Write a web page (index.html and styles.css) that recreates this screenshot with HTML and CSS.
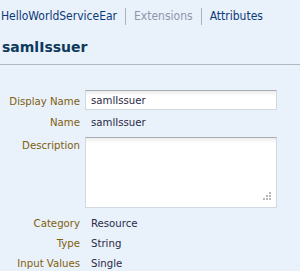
FILE: index.html
```html
<!DOCTYPE html>
<html lang="en">
<head>
    <meta charset="UTF-8">
    <title>samlIssuer</title>
    <link rel="stylesheet" href="styles.css">
</head>
<body>
    <div class="crumbs">
      <a class="crumb">HelloWorldServiceEar</a>
      <span class="crumb off">Extensions</span>
      <a class="crumb">Attributes</a>
    </div>
    <h1 class="title">samlIssuer</h1>
    <div class="form">
      <label class="lbl">Display Name</label>
      <input class="field" type="text" value="samlIssuer">
      <span class="lbl">Name</span>
      <span class="val">samlIssuer</span>
      <label class="lbl top">Description</label>
      <div class="area-wrap">
        <textarea class="area"></textarea>
        <svg class="grip" width="9" height="9" viewBox="0 0 9 9">
          <rect x="7" y="0" width="2" height="2" fill="#b8b8b8"/>
          <rect x="4" y="3" width="2" height="2" fill="#b8b8b8"/>
          <rect x="7" y="3" width="2" height="2" fill="#b8b8b8"/>
          <rect x="1" y="6" width="2" height="2" fill="#b8b8b8"/>
          <rect x="4" y="6" width="2" height="2" fill="#b8b8b8"/>
          <rect x="7" y="6" width="2" height="2" fill="#b8b8b8"/>
        </svg>
      </div>
      <span class="lbl">Category</span>
      <span class="val">Resource</span>
      <span class="lbl">Type</span>
      <span class="val">String</span>
      <span class="lbl">Input Values</span>
      <span class="val">Single</span>
    </div>
</body>
</html>
```

FILE: styles.css
```css
body { margin: 0; background: #e9f1fb; font-family: "DejaVu Sans Condensed", "DejaVu Sans", sans-serif; font-size: 11.3px; }
.crumbs { display: flex; align-items: center; padding: 8px 0 0 1px; height: 17px; font-size: 12px; }
.crumb { color: #0b3a78; padding: 0 8px; border-left: 1px solid #a9b3c0; line-height: 17px; }
.crumb:first-child { padding-left: 0; border-left: none; }
.crumb.off { color: #8d96ab; }
.title { margin: 0; padding: 13px 0 0 2px; height: 26px; font-family: "DejaVu Sans", sans-serif; font-size: 14px; color: #0d3a5a; border-bottom: 1px solid #b2b7bd; line-height: 18px; }
.form { display: grid; grid-template-columns: 80px 192px; column-gap: 5px; padding-top: 25px; align-items: center; }
.lbl { text-align: right; color: #80600c; line-height: 20px; }
.lbl.top { align-self: start; line-height: 14px; margin-top: 6px; }
.val { color: #2b2b45; padding-left: 6px; line-height: 20px; }
.field { box-sizing: border-box; height: 20px; width: 192px; margin: 0 0 3px; padding: 0 5px; border: 1px solid #d3d9e0; border-top-color: #a8adb4; background: linear-gradient(#ececec, #fff 5px); font: inherit; color: #2b2b45; }
.area-wrap { position: relative; height: 71px; margin: 4px 0 6px; }
.area { box-sizing: border-box; width: 192px; height: 71px; border: 1px solid #d3d9e0; border-top-color: #a8adb4; background: linear-gradient(#ececec, #fff 5px); resize: none; display: block; }
.grip { position: absolute; right: 6px; bottom: 7px; }
```
